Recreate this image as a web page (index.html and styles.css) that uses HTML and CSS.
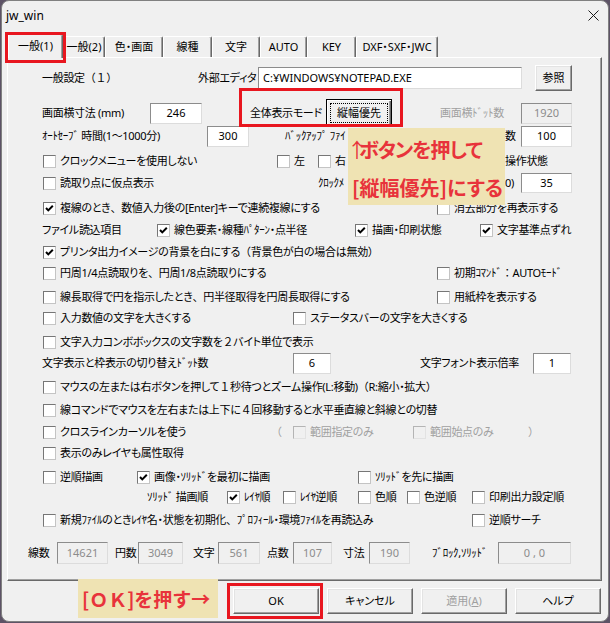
FILE: index.html
```html
<!DOCTYPE html>
<html lang="ja">
<head>
<meta charset="utf-8">
<title>jw_win</title>
<link rel="stylesheet" href="styles.css">
</head>
<body>
<div class="win">
  <div class="titlebar">
    <span class="title">jw_win</span>
    <svg class="close" width="11" height="11" viewBox="0 0 11 11"><path d="M0.5 0.5 L10.5 10.5 M10.5 0.5 L0.5 10.5" stroke="#1b1b1b" stroke-width="1" fill="none"/></svg>
  </div>

  <div class="tabs">
    <div class="tab sel t1">一般(1)</div>
    <div class="tab t2">一般(2)</div>
    <div class="tab t3">色・画面</div>
    <div class="tab t4">線種</div>
    <div class="tab t5">文字</div>
    <div class="tab t6">AUTO</div>
    <div class="tab t7">KEY</div>
    <div class="tab t8">DXF・SXF・JWC</div>
  </div>

  <div class="panel">
    <div class="row r1">
      <span>一般設定<span class="fw">（１）</span></span>
      <span>外部エディタ</span>
      <span class="edit left e-editor">C:¥WINDOWS¥NOTEPAD.EXE</span>
      <span class="btn b-browse">参照</span>
    </div>
    <div class="row r2">
      <span>画面横寸法 (mm)</span>
      <span class="edit e-52">246</span>
      <span>全体表示モード</span>
      <span class="btn default b-mode"><span class="focus">縦幅優先</span></span>
      <span class="dis">画面横ﾄﾞｯﾄ数</span>
      <span class="edit off e-51">1920</span>
    </div>
    <div class="row r3">
      <span>ｵｰﾄｾｰﾌﾞ 時間(1<span class="fw">～</span>1000分)</span>
      <span class="edit e-42">300</span>
      <span>ﾊﾞｯｸｱｯﾌﾟ ﾌｧｲ</span>
      <span>数</span>
      <span class="edit e-51">100</span>
    </div>
    <div class="row r4">
      <label class="ck"><i class="box"></i>クロックメニューを使用しない</label>
      <label class="ck"><i class="box"></i>左</label>
      <label class="ck"><i class="box"></i>右</label>
      <span>操作状態</span>
    </div>
    <div class="row r5">
      <label class="ck"><i class="box"></i>読取り点に仮点表示</label>
      <span>ｸﾛｯｸﾒ</span>
      <span>0)</span>
      <span class="edit e-51 e-short">35</span>
    </div>
    <div class="row r6">
      <label class="ck"><i class="box"><svg width="11" height="11" viewBox="0 0 11 11"><path d="M2 5 L4.3 7.4 L8.8 2.8" stroke="#000" stroke-width="2" fill="none"/></svg></i>複線のとき<span class="fw">、</span>数値入力後の[Enter]キーで連続複線にする</label>
      <label class="ck"><i class="box"></i>消去部分を再表示する</label>
    </div>
    <div class="row r7">
      <span>ファイル読込項目</span>
      <label class="ck"><i class="box"><svg width="11" height="11" viewBox="0 0 11 11"><path d="M2 5 L4.3 7.4 L8.8 2.8" stroke="#000" stroke-width="2" fill="none"/></svg></i>線色要素・線種ﾊﾟﾀｰﾝ・点半径</label>
      <label class="ck"><i class="box"><svg width="11" height="11" viewBox="0 0 11 11"><path d="M2 5 L4.3 7.4 L8.8 2.8" stroke="#000" stroke-width="2" fill="none"/></svg></i>描画・印刷状態</label>
      <label class="ck"><i class="box"><svg width="11" height="11" viewBox="0 0 11 11"><path d="M2 5 L4.3 7.4 L8.8 2.8" stroke="#000" stroke-width="2" fill="none"/></svg></i>文字基準点ずれ</label>
    </div>
    <div class="row r8">
      <label class="ck"><i class="box"><svg width="11" height="11" viewBox="0 0 11 11"><path d="M2 5 L4.3 7.4 L8.8 2.8" stroke="#000" stroke-width="2" fill="none"/></svg></i>プリンタ出力イメージの背景を白にする<span class="fw">（</span>背景色が白の場合は無効<span class="fw">）</span></label>
    </div>
    <div class="row r9">
      <label class="ck"><i class="box"></i>円周1/4点読取りを<span class="fw">、</span>円周1/8点読取りにする</label>
      <label class="ck"><i class="box"></i>初期ｺﾏﾝﾄﾞ<span class="fw">：</span>AUTOﾓｰﾄﾞ</label>
    </div>
    <div class="row r10">
      <label class="ck"><i class="box"></i>線長取得で円を指示したとき<span class="fw">、</span>円半径取得を円周長取得にする</label>
      <label class="ck"><i class="box"></i>用紙枠を表示する</label>
    </div>
    <div class="row r11">
      <label class="ck"><i class="box"></i>入力数値の文字を大きくする</label>
      <label class="ck"><i class="box"></i>ステータスバーの文字を大きくする</label>
    </div>
    <div class="row r12">
      <label class="ck"><i class="box"></i>文字入力コンボボックスの文字数を<span class="fw">２</span>バイト単位で表示</label>
    </div>
    <div class="row r13">
      <span>文字表示と枠表示の切り替えﾄﾞｯﾄ数</span>
      <span class="edit e-38">6</span>
      <span>文字フォント表示倍率</span>
      <span class="edit e-38">1</span>
    </div>
    <div class="row r14">
      <label class="ck"><i class="box"></i>マウスの左または右ボタンを押して<span class="fw">１</span>秒待つとズーム操作(L:移動)<span class="fw">（</span>R:縮小・拡大<span class="fw">）</span></label>
    </div>
    <div class="row r15">
      <label class="ck"><i class="box"></i>線コマンドでマウスを左右または上下に<span class="fw">４</span>回移動すると水平垂直線と斜線との切替</label>
    </div>
    <div class="row r16">
      <label class="ck"><i class="box"></i>クロスラインカーソルを使う</label>
      <span class="dis fw">（</span>
      <label class="ck dis"><i class="box off"></i>範囲指定のみ</label>
      <label class="ck dis"><i class="box off"></i>範囲始点のみ</label>
      <span class="dis fw">）</span>
    </div>
    <div class="row r17">
      <label class="ck"><i class="box"></i>表示のみレイヤも属性取得</label>
    </div>
    <div class="row r18">
      <label class="ck"><i class="box"></i>逆順描画</label>
      <label class="ck"><i class="box"><svg width="11" height="11" viewBox="0 0 11 11"><path d="M2 5 L4.3 7.4 L8.8 2.8" stroke="#000" stroke-width="2" fill="none"/></svg></i>画像・ｿﾘｯﾄﾞを最初に描画</label>
      <label class="ck"><i class="box"></i>ｿﾘｯﾄﾞを先に描画</label>
    </div>
    <div class="row r19">
      <span>ｿﾘｯﾄﾞ 描画順</span>
      <label class="ck"><i class="box"><svg width="11" height="11" viewBox="0 0 11 11"><path d="M2 5 L4.3 7.4 L8.8 2.8" stroke="#000" stroke-width="2" fill="none"/></svg></i>ﾚｲﾔ順</label>
      <label class="ck"><i class="box"></i>ﾚｲﾔ逆順</label>
      <label class="ck"><i class="box"></i>色順</label>
      <label class="ck"><i class="box"></i>色逆順</label>
      <label class="ck"><i class="box"></i>印刷出力設定順</label>
    </div>
    <div class="row r20">
      <label class="ck"><i class="box"></i>新規ﾌｧｲﾙのときﾚｲﾔ名・状態を初期化<span class="fw">、</span>ﾌﾟﾛﾌｨｰﾙ・環境ﾌｧｲﾙを再読込み</label>
      <label class="ck"><i class="box"></i>逆順サーチ</label>
    </div>
    <div class="row r21">
      <span>線数</span>
      <span class="edit off s-lines">14621</span>
      <span>円数</span>
      <span class="edit off s-circles">3049</span>
      <span>文字</span>
      <span class="edit off s-text">561</span>
      <span>点数</span>
      <span class="edit off s-points">107</span>
      <span>寸法</span>
      <span class="edit off s-dims">190</span>
      <span>ﾌﾞﾛｯｸ,ｿﾘｯﾄﾞ</span>
      <span class="edit off s-blocks">0 , 0</span>
    </div>
  </div>

  <div class="buttons">
    <span class="btn dlg">OK</span>
    <span class="btn dlg">キャンセル</span>
    <span class="btn dlg dis">適用(<u>A</u>)</span>
    <span class="btn dlg">ヘルプ</span>
  </div>

  <div class="note note-mode"><span class="arrow">↑</span><span class="tight">ボタンを押して</span><br>[縦幅優先]にする</div>
  <div class="note note-ok">[ＯＫ]を押す→</div>
  <div class="mark mark-tab"></div>
  <div class="mark mark-mode"></div>
  <div class="mark mark-ok"></div>
</div>
</body>
</html>
```

FILE: styles.css
```css
* { box-sizing: border-box; margin: 0; padding: 0; }

body {
  width: 610px;
  height: 623px;
  overflow: hidden;
  background: #5d5366;
  font-family: "Noto Sans", "Noto Sans CJK JP", sans-serif;
  font-size: 11px;
  line-height: 14px;
  color: #000;
  font-feature-settings: "palt" 1;
}

.win {
  margin-left: 1px;
  width: 608px;
  height: 622px;
  background: #f0f0f0;
  border: 1px solid #808080;
  border-radius: 8px;
  display: flex;
  flex-direction: column;
  overflow: hidden;
}

.titlebar {
  flex: none;
  height: 29px;
  display: flex;
  align-items: center;
  justify-content: space-between;
  padding: 0 9px 0 4px;
}
.title { font-size: 12px; }
.close { display: block; }

/* tabs */
.tabs {
  flex: none;
  height: 23px;
  margin-top: 4px;
  padding-left: 6px;
  display: flex;
  align-items: flex-end;
}
.tab {
  flex: none;
  height: 21px;
  display: flex;
  align-items: center;
  justify-content: center;
  background: #f0f0f0;
  border: 1px solid #fff;
  border-bottom: 0;
  border-right-color: #696969;
  box-shadow: inset -1px 0 #a0a0a0;
  border-radius: 2px 2px 0 0;
}
.tab.sel {
  height: 24px;
  margin-bottom: -1px;
  padding-bottom: 2px;
  position: relative;
  z-index: 2;
}
.t1 { width: 55px; }
.t2 { width: 42px; }
.t3 { width: 58px; }
.t4 { width: 49px; }
.t5 { width: 48px; }
.t6 { width: 47px; }
.t7 { width: 49px; }
.t8 { width: 82px; }

/* panel */
.panel {
  flex: none;
  margin-left: 5px;
  width: 595px;
  height: 524px;
  border: 1px solid;
  border-color: #fff #696969 #696969 #fff;
  box-shadow: inset -1px -1px #a0a0a0;
  padding-top: 7px;
  display: flex;
  flex-direction: column;
  letter-spacing: -0.3px;
}

.fw { font-feature-settings: normal; }

.row {
  flex: none;
  height: 22px;
  display: grid;
  align-items: center;
  justify-items: start;
  white-space: nowrap;
}

.r1  { padding-left: 34px; grid-template-columns: 156px 60px 277px 37px; }
.r2  { margin-top: 12px; padding-left: 34px; grid-template-columns: 108px 100px 76px 114px 81px 51px; }
.r3  { margin-top: 4px; padding-left: 34px; grid-template-columns: 165px 78px 220px 16px 51px; }
.r4  { margin-top: 3px; padding-left: 35px; grid-template-columns: 234px 41px 187px auto; }
.r5  { padding-left: 35px; grid-template-columns: 275px 187px 16px 51px; }
.r6  { margin-top: 3px; padding-left: 35px; grid-template-columns: 394px auto; }
.r7  { padding-left: 34px; grid-template-columns: 115px 198px 125px auto; }
.r8  { padding-left: 35px; }
.r9  { margin-top: -1px; padding-left: 35px; grid-template-columns: 394px auto; }
.r10 { margin-top: 2px; padding-left: 35px; grid-template-columns: 394px auto; }
.r11 { margin-top: -1px; padding-left: 35px; grid-template-columns: 250px auto; }
.r12 { margin-top: 2px; padding-left: 35px; }
.r13 { margin-top: -1px; padding-left: 34px; grid-template-columns: 251px 127px 113px 38px; }
.r14 { margin-top: 2px; padding-left: 35px; }
.r15 { margin-top: 1px; padding-left: 35px; }
.r16 { padding-left: 35px; grid-template-columns: 228px 22px 120px 115px auto; }
.r17 { margin-top: -1px; padding-left: 35px; }
.r18 { margin-top: 2px; padding-left: 35px; grid-template-columns: 94px 221px auto; }
.r19 { margin-top: -2px; padding-left: 139px; grid-template-columns: 80px 56px 75px 49px 65px auto; }
.r20 { margin-top: 1px; padding-left: 35px; grid-template-columns: 429px auto; }
.r21 { margin-top: 11px; padding-left: 20px; grid-template-columns: 29px 58px 23px 55px 25px 49px 26px 50px 26px 63px 66px 73px; }

/* checkbox */
.ck { display: flex; align-items: center; }
.box {
  flex: none;
  width: 13px;
  height: 13px;
  margin-right: 4px;
  background: #fff;
  border: 1px solid;
  border-color: #767676 #c4c4c4 #c4c4c4 #767676;
  display: flex;
}
.box svg { display: block; }
.box.off {
  background: #f0f0f0;
  border-color: #b4b4b4 #e2e2e2 #e2e2e2 #b4b4b4;
}

.dis { color: #a0a0a0; }

/* edit boxes */
.edit {
  display: flex;
  align-items: center;
  justify-content: center;
  height: 21px;
  background: #fff;
  border: 1px solid;
  border-color: #8c8c8c #dcdcdc #dcdcdc #8c8c8c;
  letter-spacing: 0;
}
.edit.left { justify-content: flex-start; padding-left: 4px; }
.edit.off { background: #f0f0f0; color: #8c8c8c; }
.e-editor { width: 264px; height: 22px; }
.e-52 { width: 52px; }
.e-51 { width: 51px; }
.e-42 { width: 42px; }
.e-38 { width: 38px; }
.e-short { height: 20px; }
.s-lines { width: 51px; height: 22px; }
.s-circles { width: 45px; height: 22px; }
.s-text { width: 42px; height: 22px; }
.s-points { width: 39px; height: 22px; }
.s-dims { width: 41px; height: 22px; }
.s-blocks { width: 73px; height: 22px; }

/* buttons */
.btn {
  display: flex;
  align-items: center;
  justify-content: center;
  background: #f0f0f0;
  border: 1px solid;
  border-color: #fff #696969 #696969 #fff;
  box-shadow: inset -1px -1px #a0a0a0, inset 1px 1px #e3e3e3;
  letter-spacing: 0;
}
.b-browse { width: 37px; height: 26px; align-self: start; }
.btn.default {
  border-color: #000;
  box-shadow: inset 1px 1px #fff, inset -1px -1px #696969, inset -2px -2px #a0a0a0;
}
.b-mode { width: 66px; height: 28px; align-self: end; }
.focus {
  width: 58px;
  height: 20px;
  border: 1px dotted #000;
  display: flex;
  align-items: center;
  justify-content: center;
}

.buttons {
  flex: none;
  margin-top: 7px;
  padding-right: 7px;
  display: flex;
  justify-content: flex-end;
  gap: 8px;
}
.dlg { width: 86px; height: 26px; }

/* annotation overlays */
.note {
  position: absolute;
  background: #efe3b3;
  color: #e8333b;
  font-family: "Noto Sans CJK JP", sans-serif;
  font-weight: 700;
  white-space: nowrap;
  z-index: 4;
}
.note-mode {
  left: 348px;
  top: 128px;
  width: 157px;
  height: 77px;
  padding: 3px 0 0 4px;
  font-size: 20px;
  line-height: 38px;
}
.arrow {
  margin-left: -5px;
  letter-spacing: -8px;
  font-weight: 400;
}
.tight { letter-spacing: -1px; }
.note-ok {
  left: 78px;
  top: 579px;
  width: 140px;
  height: 39px;
  padding-left: 4px;
  font-size: 19px;
  line-height: 39px;
  font-feature-settings: normal;
}

.mark {
  position: absolute;
  border: 3px solid #e8161f;
  z-index: 5;
}
.mark-tab { left: 5px; top: 32px; width: 61px; height: 31px; }
.mark-mode { left: 239px; top: 88px; width: 164px; height: 39px; }
.mark-ok { left: 227px; top: 583px; width: 96px; height: 36px; }
```
